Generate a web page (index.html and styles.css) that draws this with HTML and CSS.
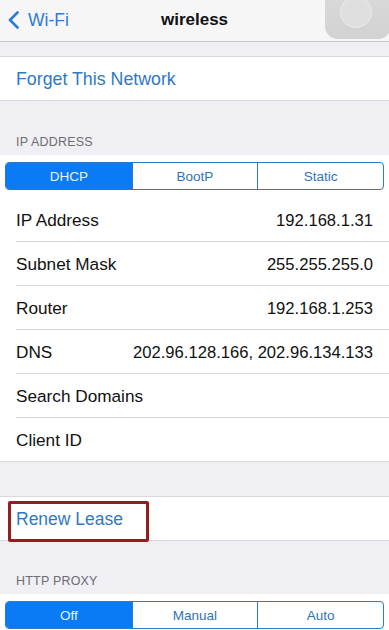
FILE: index.html
```html
<!DOCTYPE html>
<html>
<head>
<meta charset="utf-8">
<link rel="stylesheet" href="styles.css">
</head>
<body>
<header class="nav">
  <a class="back">
    <svg class="chev" width="11" height="18" viewBox="0 0 11 18"><path d="M9.5 1.5 L2 9 L9.5 16.5" fill="none" stroke="currentColor" stroke-width="2.6" stroke-linecap="round" stroke-linejoin="round"/></svg>
    <span>Wi-Fi</span>
  </a>
  <div class="title">wireless</div>
  <div></div>
</header>
<div class="assist"><div class="assist-ring"></div></div>

<section class="group forget">
  <div class="cell link">Forget This Network</div>
</section>

<div class="section-header">IP ADDRESS</div>
<section class="group">
  <div class="seg-wrap">
    <div class="seg">
      <div class="seg-item active">DHCP</div>
      <div class="seg-item">BootP</div>
      <div class="seg-item">Static</div>
    </div>
  </div>
  <div class="row"><span>IP Address</span><span class="val">192.168.1.31</span></div>
  <div class="row"><span>Subnet Mask</span><span class="val">255.255.255.0</span></div>
  <div class="row"><span>Router</span><span class="val">192.168.1.253</span></div>
  <div class="row"><span>DNS</span><span class="val">202.96.128.166, 202.96.134.133</span></div>
  <div class="row"><span>Search Domains</span><span class="val"></span></div>
  <div class="row last"><span>Client ID</span><span class="val"></span></div>
</section>

<section class="group renew">
  <div class="cell link">Renew Lease</div>
  <div class="highlight"></div>
</section>

<div class="section-header proxy">HTTP PROXY</div>
<section class="group">
  <div class="seg-wrap">
    <div class="seg">
      <div class="seg-item active">Off</div>
      <div class="seg-item">Manual</div>
      <div class="seg-item">Auto</div>
    </div>
  </div>
</section>
</body>
</html>
```

FILE: styles.css
```css
* { box-sizing: border-box; }
html, body { margin: 0; padding: 0; }
body {
  background: #efeff4;
  font-family: "Liberation Sans", Arial, sans-serif;
  color: #111;
  width: 389px;
  height: 630px;
  overflow: hidden;
  position: relative;
}
.nav {
  height: 42px;
  background: #f6f6f7;
  border-bottom: 1px solid #c9c9cc;
  display: grid;
  grid-template-columns: 1fr auto 1fr;
  align-items: center;
  padding-bottom: 1px;
}
.back {
  display: flex;
  align-items: center;
  color: #2f7ad6;
  font-size: 17.5px;
  padding-left: 8px;
}
.chev { margin-right: 9px; }
.title {
  font-weight: bold;
  font-size: 17px;
  color: #111;
}
.assist {
  position: absolute;
  left: 325px;
  top: -27px;
  width: 66px;
  height: 66px;
  border-radius: 13px;
  background: linear-gradient(#dcdcdc, #d2d2d2);
  display: flex;
  align-items: center;
  justify-content: center;
}
.assist-ring {
  width: 32px;
  height: 32px;
  border-radius: 50%;
  background: #dfdfdf;
  border: 2px solid #e4e4e4;
  margin-left: -4px;
  margin-top: 12px;
}
.group {
  background: #fff;
  border-top: 1px solid #d9d9dc;
  border-bottom: 1px solid #d9d9dc;
  position: relative;
}
.forget { margin-top: 14px; }
.cell {
  height: 43px;
  display: flex;
  align-items: center;
  padding: 2px 0 0 16px;
  font-size: 17.5px;
}
.forget .cell { font-size: 17.8px; }
.link { color: #2f78c4; }
.section-header {
  height: 54px;
  display: flex;
  align-items: flex-end;
  padding: 0 16px 5px;
  font-size: 12.5px;
  line-height: 16px;
  color: #6d6d72;
  letter-spacing: 0.2px;
}
.section-header + .group { border-top: none; }
.proxy { height: 53px; padding-bottom: 5px; }
.seg-wrap { padding: 7px 5px 8px; }
.seg {
  display: grid;
  grid-template-columns: 1fr 1fr 1fr;
  height: 28px;
  border: 1px solid #2d79c7;
  border-radius: 4px;
  overflow: hidden;
}
.seg-item {
  display: flex;
  align-items: center;
  justify-content: center;
  font-size: 13.5px;
  color: #2f73b8;
  border-left: 1px solid #2d79c7;
}
.seg-item:first-child { border-left: none; }
.seg-item.active {
  background: #0a7af5;
  color: #eaf4ff;
}
.row {
  height: 44px;
  margin-left: 16px;
  padding: 2px 16px 0 0;
  border-bottom: 1px solid #d9d9dc;
  display: flex;
  align-items: center;
  justify-content: space-between;
  font-size: 17.2px;
}
.val { font-size: 16.6px; }
.row.last { border-bottom: none; height: 43px; }
.renew { margin-top: 34px; }
.highlight {
  position: absolute;
  left: 8px;
  top: 4px;
  width: 141px;
  height: 41px;
  border: 3px solid #981c1f;
  border-radius: 2px;
}
```
